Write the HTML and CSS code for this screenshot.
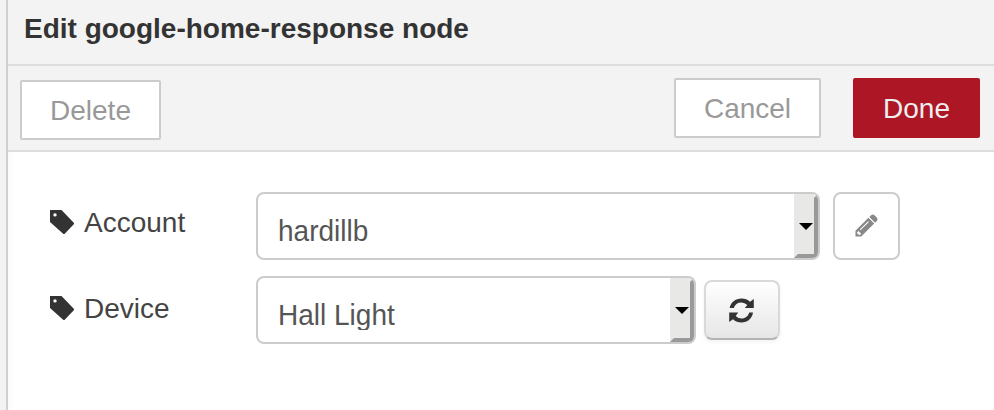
FILE: index.html
```html
<!DOCTYPE html>
<html lang="en">
<head>
<meta charset="utf-8">
<title>Edit node</title>
<link rel="stylesheet" href="styles.css">
</head>
<body>
<svg width="0" height="0" class="defs">
  <symbol id="tag" viewBox="0 0 24 24"><path fill-rule="evenodd" d="M0 0H11.500L24.500 13.500 14 24.500 0 12ZM5 3.200A1.700 1.700 0 1 0 5 6.600A1.700 1.700 0 1 0 5 3.200Z"/></symbol>
</svg>
<main class="tray">
  <header class="title">Edit google-home-response node</header>
  <div class="toolbar">
    <button class="btn delete">Delete</button>
    <button class="btn cancel">Cancel</button>
    <button class="btn done">Done</button>
  </div>
  <form class="form">
    <div class="row">
      <label><svg class="tag"><use href="#tag"/></svg>Account</label>
      <div class="select wide"><span class="value"><span class="text">hardillb</span></span><span class="drop"><i></i></span></div>
      <button type="button" class="edit"><svg class="pencil" viewBox="0 0 24 24"><path fill-rule="evenodd" d="M14 4L20 10 6.500 23.500H.5V17.500ZM15 3L17 1Q18.500 0 20 1L23 4Q24 5.500 23 7L21 9ZM2.200 19V20.500H3.700V22H5L6.500 20.500 3.700 17.700ZM5 16.200L5.800 17 14.500 8.300 13.700 7.500Z"/></svg></button>
    </div>
    <div class="row device">
      <label><svg class="tag"><use href="#tag"/></svg>Device</label>
      <div class="select"><span class="value"><span class="text">Hall Light</span></span><span class="drop"><i></i></span></div>
      <button type="button" class="refresh"><svg viewBox="0 0 25 25"><path d="M.7 10C1.500 4.500 6.500.5 12.500.5Q17.500.5 21 3.800L24.800 1V10H15.800L18.300 7Q15.800 4.500 12.500 4.500C8.500 4.500 5.800 6.500 4.800 10ZM24 14.500C23.200 20.500 18.500 24.500 12.500 24.500Q7.500 24.500 4 21.200L.2 24V14.500H9.200L6.700 18Q9.200 20.500 12.500 20.500C16.500 20.500 19.200 18 20.200 14.500Z"/></svg></button>
    </div>
  </form>
</main>
</body>
</html>
```

FILE: styles.css
```css
* { box-sizing: border-box; }
body {
  margin: 0;
  height: 410px;
  padding-left: 6px;
  overflow: hidden;
  background: #f3f3f3;
  color: #444;
  font: 28px/40px "Liberation Sans", Arial, sans-serif;
}
.defs { position: absolute; }
.tray {
  height: 410px;
  border-left: 2px solid #d0d0d0;
  background: linear-gradient(90deg, #fbfbfb, #fff 8px);
}
.title {
  height: 66px;
  padding: 9px 16px;
  border-bottom: 2px solid #ddd;
  background: #f3f3f3;
  color: #333;
  font-weight: bold;
}
.toolbar {
  display: flex;
  height: 86px;
  padding: 12px 14px 0 12px;
  border-bottom: 2px solid #ddd;
  background: #f3f3f3;
}
button {
  margin: 0;
  padding: 0;
  font: inherit;
}
.btn {
  height: 60px;
  padding-top: 2px;
  border: 2px solid #ccc;
  border-radius: 2px;
  background: #fff;
  color: #999;
}
.delete { width: 141px; margin-top: 2px; }
.cancel { width: 147px; margin-left: auto; }
.done {
  width: 127px;
  margin-left: 32px;
  border-color: #ad1625;
  background: #ad1625;
  color: #eee;
}
.form { padding: 40px 0 0 42px; }
.row {
  display: flex;
  height: 68px;
  margin-bottom: 16px;
}
label {
  display: flex;
  width: 206px;
  padding-top: 11px;
}
.device label { padding-top: 13px; }
.tag {
  width: 24px;
  height: 24px;
  margin: 7px 10px 0 0;
  overflow: visible;
  fill: #333;
}
.select {
  display: flex;
  width: 440px;
  height: 68px;
  border: 2px solid #ccc;
  border-radius: 8px;
  overflow: hidden;
  background: #fff;
}
.wide { width: 564px; }
.value {
  flex: 1;
  height: 52px;
  padding: 18px 0 0 20px;
  overflow: hidden;
  color: #555;
}
.text {
  display: inline-block;
  transform: scaleY(1.05);
  transform-origin: 0 30px;
}
.drop {
  display: flex;
  width: 24px;
  align-items: center;
  border: 4px outset #e8e8e7;
  border-color: #e8e8e7 #999 #999 #e8e8e7;
  border-style: solid;
  background: #e8e8e7;
}
.drop i {
  margin-left: 1px;
  border: solid transparent;
  border-width: 7px 7px 0;
  border-top-color: #000;
}
.edit, .refresh {
  display: flex;
  align-items: center;
  justify-content: center;
}
.edit {
  width: 67px;
  height: 68px;
  margin-left: 13px;
  border: 2px solid #ccc;
  border-radius: 8px;
  background: #fff;
}
.pencil { width: 23px; height: 23px; margin-bottom: 2px; fill: #888; }
.refresh {
  width: 76px;
  height: 60px;
  margin: 4px 0 0 8px;
  border: 2px solid #d9d9d9;
  border-bottom-color: #b3b3b3;
  border-radius: 8px;
  background: linear-gradient(#fff, #e6e6e6);
  box-shadow: 0 2px 4px rgba(0, 0, 0, .05);
}
.refresh svg { width: 25px; height: 25px; margin-right: 1px; fill: #333; }
```
